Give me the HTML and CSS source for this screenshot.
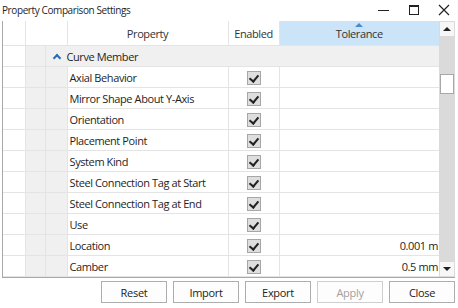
FILE: index.html
```html
<!DOCTYPE html>
<html lang="en">
<head>
    <meta charset="UTF-8">
    <title>Property Comparison Settings</title>
    <link rel="stylesheet" href="styles.css">
</head>
<body>
    <div class="window">
        <div class="titlebar">
            <span class="title">Property Comparison Settings</span>
            <div class="controls">
                <svg width="14" height="14" viewBox="0 0 14 14"><path d="M1 7.5h11" stroke="#222" stroke-width="1"/></svg>
                <svg width="14" height="14" viewBox="0 0 14 14"><rect x="2.5" y="2.5" width="9" height="9" fill="none" stroke="#222"/><path d="M2.5 3.5h9" stroke="#222"/></svg>
                <svg width="14" height="14" viewBox="0 0 14 14"><path d="M2 2l10 10M12 2L2 12" stroke="#222" stroke-width="1.2"/></svg>
            </div>
        </div>

        <div class="grid-box">
            <table class="grid">
                <colgroup>
                    <col style="width:22px">
                    <col style="width:20px">
                    <col style="width:22px">
                    <col style="width:161px">
                    <col style="width:51px">
                    <col style="width:160px">
                </colgroup>
                <thead>
                    <tr>
                        <th></th>
                        <th colspan="2"></th>
                        <th>Property</th>
                        <th>Enabled</th>
                        <th class="sorted">Tolerance<span class="sort-arrow"></span></th>
                    </tr>
                </thead>
                <tbody id="rows">
                    <tr class="group">
                        <td class="blank"></td>
                        <td class="indent"></td>
                        <td colspan="4" class="group-cell"><span class="chev"></span>Curve Member</td>
                    </tr>
                </tbody>
            </table>
            <div class="scrollbar">
                <div class="sb-btn"><span class="arr-up"></span></div>
                <div class="sb-track">
                    <div class="sb-thumb"></div>
                </div>
                <div class="sb-btn"><span class="arr-down"></span></div>
            </div>
        </div>

        <div class="buttons">
            <button>Reset</button>
            <button>Import</button>
            <button>Export</button>
            <button disabled>Apply</button>
            <button>Close</button>
        </div>
    </div>

    <script>
        var props = [
            ["Axial Behavior", ""],
            ["Mirror Shape About Y-Axis", ""],
            ["Orientation", ""],
            ["Placement Point", ""],
            ["System Kind", ""],
            ["Steel Connection Tag at Start", ""],
            ["Steel Connection Tag at End", ""],
            ["Use", ""],
            ["Location", "0.001 m"],
            ["Camber", "0.5 mm"]
        ];
        var body = document.getElementById("rows");
        props.forEach(function (p) {
            body.innerHTML += `<tr>
                <td class="blank"></td>
                <td class="indent"></td>
                <td class="indent"></td>
                <td class="name">${p[0]}</td>
                <td class="check"><span class="box"></span></td>
                <td class="value">${p[1]}</td>
            </tr>`;
        });
    </script>
</body>
</html>
```

FILE: styles.css
```css
body {
    margin: 0;
    font-family: "Segoe UI", "Open Sans", sans-serif;
    font-size: 11px;
    letter-spacing: -0.4px;
    color: #1e1e1e;
    background: #fff;
}
.window {
    width: 458px;
    height: 308px;
    display: flex;
    flex-direction: column;
}
.titlebar {
    height: 21px;
    display: flex;
    align-items: center;
    justify-content: space-between;
    padding-left: 2px;
}
.title {
    font-size: 10px;
    letter-spacing: -0.4px;
    margin-top: -2px;
}
.controls {
    display: flex;
    gap: 16px;
    padding-right: 7px;
    margin-top: -2px;
}
.grid-box {
    display: flex;
    margin-left: 2px;
    width: 453px;
    height: 257px;
    border-left: 1px solid #a8a8a8;
    border-bottom: 1px solid #a8a8a8;
    box-sizing: border-box;
    overflow: hidden;
}
.grid {
    border-collapse: collapse;
    table-layout: fixed;
    width: 436px;
    flex: none;
}
.grid th {
    height: 24px;
    padding: 0;
    font-weight: normal;
    text-align: center;
    background: #fff;
    border-right: 1px solid #e4e4e4;
    border-bottom: 1px solid #e4e4e4;
    color: #333;
    position: relative;
}
.grid th.sorted {
    background: #cce4f7;
    border-right: none;
}
.sort-arrow {
    position: absolute;
    left: 50%;
    top: 2px;
    margin-left: -4px;
    border-left: 4px solid transparent;
    border-right: 4px solid transparent;
    border-bottom: 4px solid #4a8ac9;
}
.grid td {
    height: 20px;
    padding: 0;
    border-right: 1px solid #e4e4e4;
    border-bottom: 1px solid #e4e4e4;
    white-space: nowrap;
    overflow: hidden;
}
.grid td.indent {
    background: #f0f0f0;
}
.grid tr.group td.group-cell {
    background: #f0f0f0;
    border-right: none;
}
.chev {
    display: inline-block;
    width: 4px;
    height: 4px;
    border-left: 2px solid #2a6cb5;
    border-top: 2px solid #2a6cb5;
    transform: rotate(45deg);
    margin: 0 7px 0 8px;
    vertical-align: 0;
}
.grid td.name {
    padding-left: 2px;
}
.grid td.check {
    text-align: center;
}
.box {
    display: inline-block;
    width: 12px;
    height: 12px;
    background: #dedede;
    border: 1px solid #a6a6a6;
    vertical-align: middle;
    position: relative;
}
.box::after {
    content: "";
    position: absolute;
    left: 3px;
    top: 1px;
    width: 4px;
    height: 7px;
    border-right: 2px solid #222;
    border-bottom: 2px solid #222;
    transform: rotate(40deg);
}
.grid td.value {
    text-align: right;
    padding-right: 1px;
    border-right: none;
}
.scrollbar {
    width: 16px;
    display: flex;
    flex-direction: column;
    background: #dadada;
}
.sb-btn {
    height: 14px;
    background: #f7f7f7;
    border: 1px solid #dadada;
    display: flex;
    align-items: center;
    justify-content: center;
}
.sb-track {
    flex: 1;
    padding-top: 37px;
}
.sb-thumb {
    height: 18px;
    margin: 0 1px;
    background: #fff;
    border: 1px solid #a8a8a8;
}
.arr-up {
    border-left: 4px solid transparent;
    border-right: 4px solid transparent;
    border-bottom: 4px solid #222;
}
.arr-down {
    border-left: 4px solid transparent;
    border-right: 4px solid transparent;
    border-top: 4px solid #222;
}
.buttons {
    display: flex;
    justify-content: flex-end;
    gap: 6px;
    padding: 3px 3px 0 0;
}
.buttons button {
    width: 66px;
    height: 22px;
    font-family: "Segoe UI", "Open Sans", sans-serif;
    font-size: 11px;
    letter-spacing: -0.3px;
    color: #222;
    background: #fdfdfd;
    border: 1px solid #adadad;
    padding: 0;
}
.buttons button:disabled {
    color: #a0a0a0;
    border-color: #cfcfcf;
}
```
